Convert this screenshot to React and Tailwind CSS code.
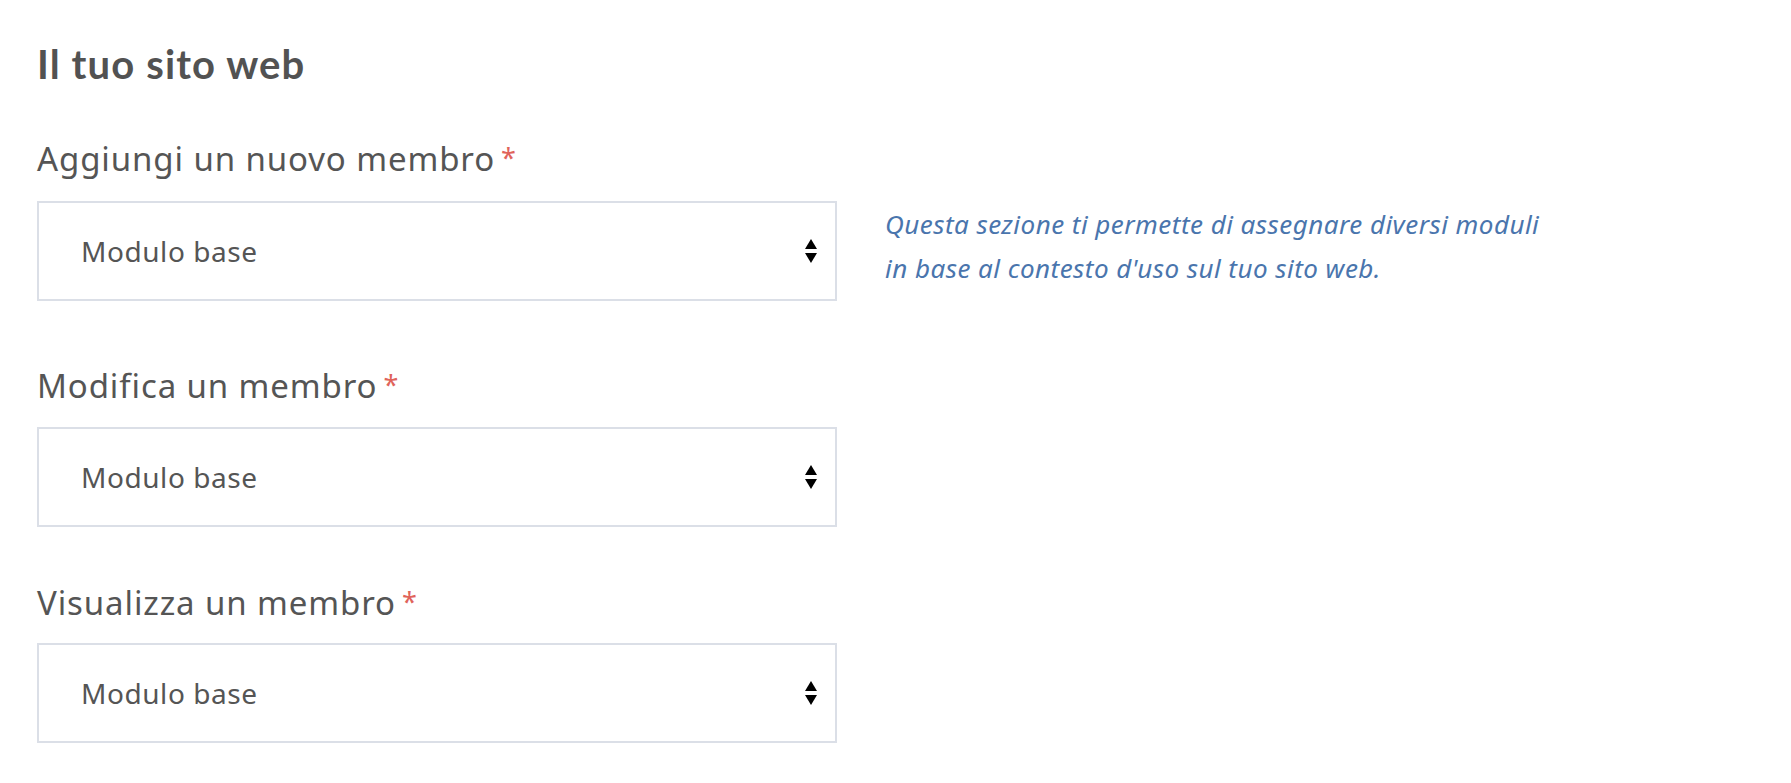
import React from 'react'

const font = { fontFamily: '"Noto Sans", Lato, sans-serif' }
const headFont = { fontFamily: 'Lato, "Noto Sans", sans-serif' }

const SelectBox = ({ value }) => {
    return (
        <div className="relative w-[800px] h-[100px] shrink-0 border-2 border-[#dbdfe7] bg-white">
            <select
                defaultValue={value}
                className="appearance-none w-full h-full bg-transparent pl-[42px] pr-12 text-[28px] tracking-[0.02em] text-[#555555] outline-none"
                style={font}
            >
                <option>{value}</option>
            </select>
            <svg
                className="pointer-events-none absolute right-[17px] top-1/2 -translate-y-1/2"
                width="14"
                height="26"
                viewBox="0 0 14 26"
            >
                <path d="M7 1 L13 11 L1 11 Z" fill="#000" />
                <path d="M1 15 L13 15 L7 25 Z" fill="#000" />
            </svg>
        </div>
    )
}

const Label = ({ children }) => (
    <label className="block h-[40px] text-[33px] leading-[40px] tracking-[0.027em] text-[#555555]">
        {children}
        <span className="relative top-[-3px] ml-[6px] text-[27px] leading-none text-[#e0635a]">*</span>
    </label>
)

const App = () => {
    return (
        <div className="min-h-screen bg-white px-[37px] pt-[40px]" style={font}>
            <h2 className="text-[40px] leading-[48px] font-bold tracking-[0.028em] text-[#525252]" style={headFont}>
                Il tuo sito web
            </h2>

            {/* Aggiungi */}
            <div className="mt-[51px]">
                <Label>Aggiungi un nuovo membro</Label>
                <div className="mt-[22px] flex items-start gap-[48px]">
                    <SelectBox value="Modulo base" />
                    <p className="mt-[1px] text-[26px] leading-[44px] italic tracking-[0.018em] text-[#4a75ad]">
                        Questa sezione ti permette di assegnare diversi moduli
                        <br />
                        in base al contesto d'uso sul tuo sito web.
                    </p>
                </div>
            </div>

            {/* Modifica */}
            <div className="mt-[65px]">
                <Label>Modifica un membro</Label>
                <div className="mt-[21px]">
                    <SelectBox value="Modulo base" />
                </div>
            </div>

            {/* Visualizza */}
            <div className="mt-[56px]">
                <Label>Visualizza un membro</Label>
                <div className="mt-[20px]">
                    <SelectBox value="Modulo base" />
                </div>
            </div>
        </div>
    )
}

export default App
